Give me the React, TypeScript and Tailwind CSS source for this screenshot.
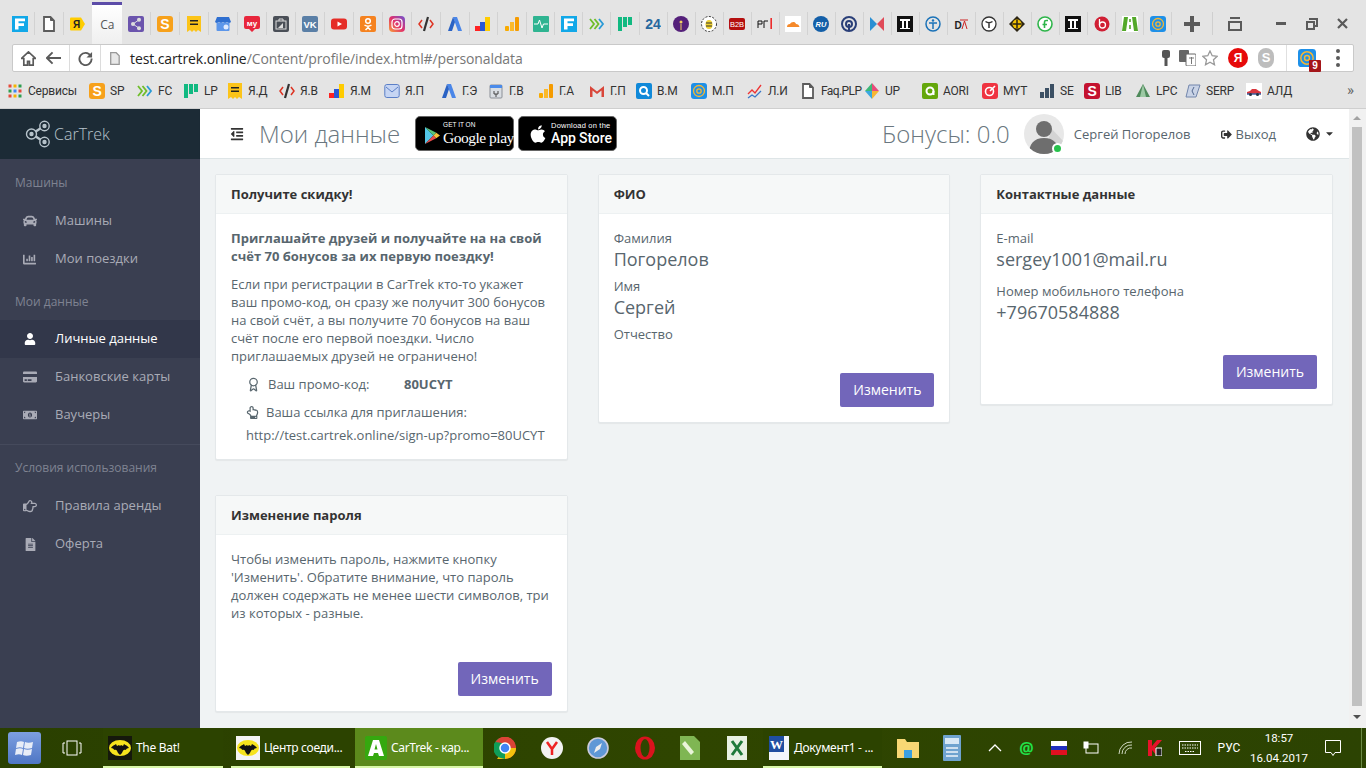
import React from "react";
import {
  FaCar, FaChartBar, FaUser, FaCreditCard, FaMoneyBillAlt, FaRegHandPointRight, FaFileAlt, FaSignOutAlt,
  FaGlobeAmericas, FaCaretDown, FaOutdent, FaApple, FaRegHandPointUp,
} from "react-icons/fa";
import { LuAward } from "react-icons/lu";

type K = { n: string };

function Box({ children, s = 16 }: { children: React.ReactNode; s?: number }) {
  return (
    <svg width={s} height={s} viewBox="0 0 16 16" className="shrink-0 block">
      {children}
    </svg>
  );
}

const T = (p: { x?: number; y?: number; c?: string; z?: number; w?: number; t: string; f?: string }) => (
  <text x={p.x ?? 8} y={p.y ?? 12} textAnchor="middle" fill={p.c ?? "#fff"} fontSize={p.z ?? 11} fontWeight={p.w ?? 700} fontFamily={p.f ?? "'Liberation Sans', sans-serif"}>
    {p.t}
  </text>
);

function Fav({ n, s = 16 }: K & { s?: number }) {
  switch (n) {
    case "F": return <Box s={s}><rect width="16" height="16" fill="#12a8e8" /><path d="M3 2.500h10v2.800H6.500v2H12v2.800H6.500V13.500H3z" fill="#fff" /></Box>;
    case "doc": return <Box s={s}><path d="M3 1h6.500l3.500 3.500V15H3z" fill="#fff" stroke="#5b5b5b" strokeWidth="1.800" /><path d="M9.500 1v3.500h3.500" fill="#5b5b5b" stroke="#5b5b5b" /></Box>;
    case "ya": return <Box s={s}><path d="M1 1.500h10l4 6.500-4 6.500H1q-1 0-1-1V2.500q0-1 1-1z" fill="#ffcc00" /><T x={6.500} y={12} c="#222" z={10} t="Я" /></Box>;
    case "share": return <Box s={s}><rect width="16" height="16" rx="2" fill="#6b54ad" /><circle cx="11" cy="3.800" r="2" fill="#ddd" /><circle cx="11" cy="12.200" r="2" fill="#ddd" /><circle cx="5" cy="8" r="2" fill="#ddd" /><path d="M11 3.800 5 8l6 4.200" stroke="#ddd" fill="none" /></Box>;
    case "S": return <Box s={s}><rect width="16" height="16" rx="3" fill="#f7a11b" /><T y={13} z={14} t="S" /></Box>;
    case "ban": return <Box s={s}><path d="M1 0h14v16l-3-2-2 2-2-2-2 2-2-2-3 2z" fill="#fcc419" /><path d="M4 4h8v1.600H4zM4 7.500h8v1.600H4z" fill="#222" /></Box>;
    case "store": return <Box s={s}><path d="M2 1h12l2 5q-2 2-4 0-2 2-4 0-2 2-4 0-2 2-4 0z" fill="#2f6fd0" /><rect x="1.500" y="6.500" width="13" height="8.500" rx="1" fill="#5c96ea" /><circle cx="11" cy="11" r="2.500" fill="#dfeaff" /></Box>;
    case "mc": return <Box s={s}><path d="M0 2q0-2 2-2h12q2 0 2 2v9q0 2-2 2h-3l-3 3-3-3H2q-2 0-2-2z" fill="#e8263c" /><T y={9.500} z={8} t="му" /></Box>;
    case "bag": return <Box s={s}><rect width="16" height="16" rx="2" fill="#4a4f57" /><rect x="3" y="5" width="10" height="8" fill="none" stroke="#ddd" /><path d="M6 5V3h4v2" stroke="#ddd" fill="none" /><path d="m5 12 5-5v5z" fill="#ddd" /></Box>;
    case "vk": return <Box s={s}><rect width="16" height="16" rx="2" fill="#5a7fa6" /><T z={9.500} t="VK" /></Box>;
    case "yt": return <Box s={s}><rect y="2.500" width="16" height="11" rx="3" fill="#e52d27" /><path d="m6.500 5.500 4.500 2.500-4.500 2.500z" fill="#fff" /></Box>;
    case "ok": return <Box s={s}><rect width="16" height="16" rx="2" fill="#f58220" /><circle cx="8" cy="5" r="2.300" fill="none" stroke="#fff" strokeWidth="1.500" /><path d="M4.500 9c2 1.500 5 1.500 7 0M8 10.500v1M5.500 14 8 11.500l2.500 2.500" stroke="#fff" strokeWidth="1.500" fill="none" /></Box>;
    case "ig": return <Box s={s}><defs><linearGradient id="ig" x1="0" y1="1" x2="1" y2="0"><stop offset="0" stopColor="#f9a13a" /><stop offset=".5" stopColor="#e1306c" /><stop offset="1" stopColor="#6b54d3" /></linearGradient></defs><rect width="16" height="16" rx="4" fill="url(#ig)" /><rect x="3" y="3" width="10" height="10" rx="3" fill="none" stroke="#fff" strokeWidth="1.200" /><circle cx="8" cy="8" r="2.300" fill="none" stroke="#fff" strokeWidth="1.200" /></Box>;
    case "wr": return <Box s={s}><path d="M4 4 1 8l3 4" stroke="#d32" strokeWidth="1.500" fill="none" /><path d="M12 4l3 4-3 4" stroke="#d32" strokeWidth="1.500" fill="none" /><path d="M10 1 6 15" stroke="#333" strokeWidth="2.200" /></Box>;
    case "ad": return <Box s={s}><path d="M6 1h4l5 14h-4z" fill="#4a86e8" /><path d="M6 1 1 15h4l3-9z" fill="#2a62c4" /></Box>;
    case "met": return <Box s={s}><rect x="0" y="10" width="5" height="5" fill="#f22" /><rect x="5" y="6" width="5" height="9" fill="#2a58d6" /><rect x="10" y="1" width="5" height="14" fill="#fc0" /></Box>;
    case "ga": return <Box s={s}><rect x="1" y="10" width="4" height="5" rx="1" fill="#f9ab00" /><rect x="6" y="6" width="4" height="9" fill="#fbb92a" /><rect x="11" y="1" width="4" height="14" rx="1" fill="#f59b00" /></Box>;
    case "pulse": return <Box s={s}><rect width="16" height="16" rx="1" fill="#2fb491" /><path d="M1 8h4l1.500-4L9 12l1.500-4H15" stroke="#fff" fill="none" /></Box>;
    case "chev": return <Box s={s}><path d="m1 3 4 5-4 5M5.500 3l4 5-4 5" stroke="#6fbd2a" strokeWidth="1.800" fill="none" /><path d="m10 3 4 5-4 5" stroke="#2a9ad6" strokeWidth="1.800" fill="none" /></Box>;
    case "lp": return <Box s={s}><rect x="1" y="1" width="4" height="14" fill="#11b981" /><rect x="6" y="1" width="4" height="10" fill="#11b981" /><rect x="11" y="1" width="4" height="8" fill="#11b981" /></Box>;
    case "24": return <Box s={s}><T y={13} z={14} c="#27689f" t="24" /></Box>;
    case "pur": return <Box s={s}><circle cx="8" cy="8" r="8" fill="#54207a" /><circle cx="8" cy="6" r="1.500" fill="#f2d060" /><path d="M8 8v6" stroke="#f2d060" /></Box>;
    case "bug": return <Box s={s}><circle cx="8" cy="8" r="7.500" fill="#fff" stroke="#333" strokeDasharray="2 1.500" /><ellipse cx="8" cy="8.500" rx="3.500" ry="4.500" fill="#f0d232" /><path d="M5 7h6M5 10h6" stroke="#333" /></Box>;
    case "b2b": return <Box s={s}><rect y="2" width="16" height="12" rx="2" fill="#b40f0f" /><T y={11} z={7.500} t="B2B" w={400} /></Box>;
    case "pr": return <Box s={s}><path d="M1 12V5h4v3H1M7 12V5h4" stroke="#111" fill="none" /><rect x="13.500" y="2" width="1.300" height="11" fill="#e00" /></Box>;
    case "cf": return <Box s={s}><rect width="16" height="16" fill="#fff" /><path d="M2 11c0-2 1-3 3-3 1-2 5-3 6 0 2 0 3 1 3.500 3z" fill="#f5892a" /></Box>;
    case "ru": return <Box s={s}><circle cx="8" cy="8" r="8" fill="#135fa8" /><text x="8" y="11" textAnchor="middle" fill="#fff" fontSize="7.500" fontWeight="700" fontStyle="italic" fontFamily="'Liberation Sans', sans-serif">RU</text></Box>;
    case "ring": return <Box s={s}><circle cx="8" cy="8" r="7" fill="none" stroke="#2a3f78" strokeWidth="2" /><circle cx="8" cy="8" r="3" fill="none" stroke="#2a3f78" strokeWidth="2" /><path d="M8 8v7" stroke="#2a3f78" strokeWidth="2" /></Box>;
    case "bow": return <Box s={s}><path d="M1 1v14l7-7z" fill="#2b8fd3" /><path d="M15 1v14L8 8z" fill="#e04a58" /></Box>;
    case "P": return <Box s={s}><rect width="16" height="16" fill="#111" /><path d="M3 3h10v2H3zM5 5h2v8H5zM9 5h2v8H9zM3 12h5v1H3zM8 12h5v1H8z" fill="#fff" /></Box>;
    case "fig": return <Box s={s}><circle cx="8" cy="8" r="7" fill="none" stroke="#1a72b8" strokeWidth="1.500" /><circle cx="8" cy="4.500" r="1.200" fill="#1a72b8" /><path d="M4 7h8M8 7v6" stroke="#1a72b8" strokeWidth="1.500" /></Box>;
    case "da": return <Box s={s}><T x={5} y={13} z={10} c="#222" t="D" /><path d="m9 13 2.500-8 2.500 8M7 4h8" stroke="#c22" fill="none" /></Box>;
    case "tc": return <Box s={s}><circle cx="8" cy="8" r="7" fill="#fff" stroke="#333" strokeWidth="1.300" /><path d="M4.500 5.500c2 1.500 5 1.500 7 0M8 6.500V12" stroke="#333" strokeWidth="1.500" fill="none" /></Box>;
    case "dia": return <Box s={s}><path d="M8 0l8 8-8 8-8-8z" fill="#2b2414" /><circle cx="8" cy="8" r="4.500" fill="#f2c200" /><path d="M8 4v8M4 8h8" stroke="#2b2414" strokeWidth="1.500" /></Box>;
    case "fg": return <Box s={s}><circle cx="8" cy="8" r="7" fill="#fff" stroke="#2eb54a" strokeWidth="1.600" /><path d="M11 4.500H9c-1 0-1.500.5-1.500 1.500v6M5.500 8.500h4.500" stroke="#2eb54a" strokeWidth="1.600" fill="none" /></Box>;
    case "b6": return <Box s={s}><circle cx="8" cy="8" r="7.500" fill="#d01f34" /><circle cx="8.500" cy="9" r="3" fill="none" stroke="#fff" strokeWidth="1.300" /><path d="M5.500 9V3" stroke="#fff" strokeWidth="1.300" /></Box>;
    case "road": return <Box s={s}><rect width="16" height="16" fill="#fff" /><path d="M2 1h4L4 15H0zM10 1h4l2 14h-4zM7.200 3h1.600v3H7.200zM7.200 9h1.600v4H7.200z" fill="#53a829" /></Box>;
    case "at": return <Box s={s}><rect width="16" height="16" rx="3" fill="#1e90e8" /><circle cx="8" cy="8" r="5.500" fill="none" stroke="#f7b733" strokeWidth="1.300" /><circle cx="8" cy="8" r="2.200" fill="none" stroke="#f7b733" strokeWidth="1.300" /></Box>;
    case "apps": return <Box s={s}><g>{[0, 1, 2].map((i) => [0, 1, 2].map((j) => <rect key={i + "-" + j} x={1.500 + i * 5} y={1.500 + j * 5} width="3" height="3" fill={["#e64a3b", "#f5b400", "#2e9e4f", "#4285f4"][(i + j * 2) % 4]} />))}</g></Box>;
    case "mail": return <Box s={s}><rect x=".8" y="1.500" width="14.400" height="13" rx="2" fill="#c6d5f3" stroke="#5b7fc7" /><path d="m2 4 6 5 6-5" stroke="#5b7fc7" fill="none" /></Box>;
    case "bk": return <Box s={s}><rect x="2" y="2" width="12" height="13" rx="1" fill="#d9dee3" stroke="#8a8f96" /><rect x="2" y="2" width="12" height="3" fill="#4b8bea" /><path d="M6 8v3h4V8M8 11v3" stroke="#444" fill="none" /></Box>;
    case "gm": return <Box s={s}><path d="M1 14V3l7 5.500L15 3v11h-2.500V7.500L8 11 3.500 7.500V14z" fill="#d9463a" /></Box>;
    case "q": return <Box s={s}><rect width="16" height="16" rx="2" fill="#1089d9" /><circle cx="7.500" cy="7.500" r="3.500" fill="none" stroke="#fff" strokeWidth="2" /><path d="m10 10 3 3" stroke="#fff" strokeWidth="2" /></Box>;
    case "li": return <Box s={s}><path d="m1 11 4-4 3 3 6-8" stroke="#e33" strokeWidth="1.300" fill="none" /><path d="m1 15 4-3 3 2 6-6" stroke="#3a78c8" strokeWidth="1.300" fill="none" /></Box>;
    case "up": return <Box s={s}><path d="M8 0 1 8h7z" fill="#3cb878" /><path d="M8 0l7 8H8z" fill="#e94b7b" /><path d="M1 8l7 8V8z" fill="#3aa8e0" /><path d="M15 8l-7 8V8z" fill="#f7b733" /></Box>;
    case "aori": return <Box s={s}><rect width="16" height="16" rx="2" fill="#64a70b" /><circle cx="8" cy="8" r="3.500" fill="none" stroke="#fff" strokeWidth="2" /><path d="M11.500 8v4" stroke="#fff" strokeWidth="2" /></Box>;
    case "myt": return <Box s={s}><rect width="16" height="16" rx="3" fill="#ef3340" /><circle cx="7.500" cy="8.500" r="4" fill="none" stroke="#fff" strokeWidth="1.600" /><path d="m8 8 5-5" stroke="#fff" strokeWidth="1.600" /></Box>;
    case "se": return <Box s={s}><rect x="1" y="9" width="4" height="6" fill="#3c5064" /><rect x="6" y="5" width="4" height="10" fill="#3c5064" /><rect x="11" y="1" width="4" height="14" fill="#3c5064" /></Box>;
    case "lib": return <Box s={s}><rect width="16" height="16" rx="3" fill="#c4122f" /><T y={13} z={14} t="S" /></Box>;
    case "tree": return <Box s={s}><path d="M8 1 1 14h14z" fill="#4f8a5b" /><path d="M8 1 5 14h6z" fill="#9cc9a4" /></Box>;
    case "serp": return <Box s={s}><path d="M4 2h11l-4 12H1z" fill="#c9d3e6" stroke="#7286ac" /><path d="M9 4 7 8l2 4" stroke="#52688f" fill="none" /></Box>;
    case "auto": return <Box s={s}><rect width="16" height="16" fill="#fff" /><path d="M1 11V9l3-1 2-2h4l3 2 2 1v2z" fill="#d9363e" /><path d="M1 11h14" stroke="#3a5fa0" strokeWidth="1.500" /><circle cx="4.500" cy="11.500" r="1.500" fill="#234" /><circle cx="11.500" cy="11.500" r="1.500" fill="#234" /></Box>;
    default: return <Box s={s}>{null}</Box>;
  }
}

const tabs = ["F","doc","ya","ACTIVE","share","S","ban","store","mc","bag","vk","yt","ok","ig","wr","ad","met","ga","pulse","F","chev","lp","24","pur","bug","b2b","pr","cf","ru","ring","bow","P","fig","da","tc","dia","fg","P","b6","road","at"];

const bookmarks: { i: string; t: string; w: string; c?: string }[] = [
  { i: "S", t: "SP", w: "w-[48px]" }, { i: "chev", t: "FC", w: "w-[46px]" }, { i: "lp", t: "LP", w: "w-[44px]" },
  { i: "ban", t: "Я.Д", w: "w-[52px]" }, { i: "wr", t: "Я.В", w: "w-[50px]" }, { i: "met", t: "Я.М", w: "w-[55px]" },
  { i: "mail", t: "Я.П", w: "w-[57px]" }, { i: "ad", t: "Г.Э", w: "w-[47px]" }, { i: "bk", t: "Г.В", w: "w-[50px]" },
  { i: "ga", t: "Г.А", w: "w-[51px]" }, { i: "gm", t: "Г.П", w: "w-[47px]" }, { i: "q", t: "В.М", w: "w-[55px]" },
  { i: "at", t: "М.П", w: "w-[56px]" }, { i: "li", t: "Л.И", w: "w-[53px]" }, { i: "doc", t: "Faq.PLP", w: "w-[64px]", c: "tracking-[-0.6px]" },
  { i: "up", t: "UP", w: "w-[58px]" }, { i: "aori", t: "AORI", w: "w-[60px]" }, { i: "myt", t: "MYT", w: "w-[57px]" },
  { i: "se", t: "SE", w: "w-[45px]" }, { i: "lib", t: "LIB", w: "w-[51px]" }, { i: "tree", t: "LPC", w: "w-[50px]" },
  { i: "serp", t: "SERP", w: "w-[61px]" }, { i: "auto", t: "АЛД", w: "w-[60px]" },
];

function Browser() {
  return (
    <div className="h-[109px] shrink-0 bg-[#e4e4e4] flex flex-col text-[#333] border-b border-[#cfcfcf]">
      <div className="h-[44px] flex items-start pl-[6.500px]">
        {tabs.map((n, idx) =>
          n === "ACTIVE" ? (
            <div key={idx} className="w-[29.940px] -ml-[1px] h-[42px] mt-[2px] border-t-[3px] border-[#5c4ca8] bg-gradient-to-b from-white to-[#efefef] flex items-center justify-center text-[12px] text-[#555]">
              Ca
            </div>
          ) : (
            <div key={idx} className={(idx < 18 ? "w-[28.940px]" : "w-[28.040px]") + " h-[23px] mt-[12px] flex items-center justify-center border-r border-[#d2d2d2]"}>
              <Fav n={n} />
            </div>
          )
        )}
        <div className="w-[41px] h-[23px] mt-[12px] flex items-center justify-center border-r border-[#cfcfcf]">
          <svg width="16" height="16" viewBox="0 0 16 16"><path d="M6 0h4v6h6v4h-6v6H6v-6H0V6h6z" fill="#5a5a5a" /></svg>
        </div>
        <div className="w-[43px] h-[23px] mt-[12px] flex items-center justify-center">
          <svg width="16" height="14" viewBox="0 0 16 14"><path d="M1 4h14v10H1zM3 0h10v2H3z" fill="#5a5a5a" /><rect x="3" y="6" width="10" height="6" fill="#e4e4e4" /></svg>
        </div>
        <div className="flex-1" />
        <div className="w-[31px] h-[23px] mt-[12px] flex items-center justify-center"><div className="w-[10px] h-[3px] bg-[#5a5a5a]" /></div>
        <div className="w-[31px] h-[23px] mt-[12px] flex items-center justify-center">
          <svg width="12" height="12" viewBox="0 0 12 12"><path d="M3 1h8v7H9M1 4h7v7H1z" stroke="#5a5a5a" strokeWidth="2" fill="none" /></svg>
        </div>
        <div className="w-[39px] h-[23px] mt-[12px] flex items-center justify-start pl-[10px]">
          <svg width="11" height="11" viewBox="0 0 11 11"><path d="m1 1 9 9M10 1l-9 9" stroke="#5a5a5a" strokeWidth="2.200" /></svg>
        </div>
      </div>
      <div className="mx-[12px] h-[28px] shrink-0 bg-white border border-[#c9c9c9] rounded-[2px] flex items-center">
        <div className="w-[57px] h-full border-r border-[#dcdcdc] flex items-center gap-[10px] pl-[8px]">
          <svg width="15" height="15" viewBox="0 0 16 16"><path d="M8 1 .5 8H3v7h4v-4h2v4h4V8h2.500z" fill="none" stroke="#5a5a5a" strokeWidth="1.800" /></svg>
          <svg width="15" height="14" viewBox="0 0 16 14"><path d="M7 1 1 7l6 6M1 7h15" fill="none" stroke="#5a5a5a" strokeWidth="2" /></svg>
        </div>
        <div className="w-[31px] h-full border-r border-[#dcdcdc] flex items-center justify-center">
          <svg width="15" height="15" viewBox="0 0 16 16"><path d="M13.500 5A6.500 6.500 0 1 0 14.500 8" fill="none" stroke="#5a5a5a" strokeWidth="2" /><path d="M15 1v6H9z" fill="#5a5a5a" /></svg>
        </div>
        <div className="ml-[9px] w-[20px]">
          <svg width="10" height="13" viewBox="0 0 10 13"><path d="M.700.700h5.500l3 3v8.600H.700z" fill="#e8e8e8" stroke="#999" strokeWidth="1.300" /></svg>
        </div>
        <div className="text-[14px] font-['Open_Sans',sans-serif] tracking-[-0.1px]">
          <span className="text-[#222]">test.cartrek.online</span>
          <span className="text-[#777]">/Content/profile/index.html#/personaldata</span>
        </div>
        <div className="flex-1" />
        <div className="flex items-center w-[64px] gap-[6px] pl-[1px]">
          <svg width="14" height="16" viewBox="0 0 14 16"><rect x="3" y="0" width="8" height="8" rx="2" fill="#555" /><rect x="5.500" y="7" width="3" height="9" fill="#555" /></svg>
          <svg width="17" height="16" viewBox="0 0 17 16"><rect x="0" y="0" width="10" height="12" rx="1" fill="#666" /><rect x="7" y="4" width="10" height="12" rx="1" fill="#fff" stroke="#666" /><path d="M10 8h5M12.500 7v7" stroke="#777" /></svg>
          <svg width="16" height="16" viewBox="0 0 16 16"><path d="m8 1 2.200 4.700 5 .6-3.700 3.500 1 5L8 12.300l-4.500 2.500 1-5L.8 6.300l5-.6z" fill="none" stroke="#999" strokeWidth="1.300" /></svg>
        </div>
        <div className="w-[20px] h-[20px] rounded-full bg-[#e60a0a] text-white text-[12px] font-bold flex items-center justify-center font-['Liberation_Sans',sans-serif] ml-[6px]">Я</div>
        <div className="w-[16px] h-[20px] rounded-full bg-[#bdbdbd] ml-[10px] flex items-center justify-center text-white text-[13px] font-bold font-['Liberation_Sans',sans-serif]">S</div>
        <div className="w-[1px] h-full bg-[#e0e0e0] ml-[12px]" />
        <div className="relative ml-[11px] w-[18px]">
          <Fav n="at" s={18} />
          <div className="absolute -right-[5px] -bottom-[5px] w-[12px] h-[12px] bg-[#a4161a] text-white text-[10px] font-bold leading-[12px] text-center rounded-[1px] font-['Liberation_Sans',sans-serif]">9</div>
        </div>
        <div className="ml-[20px] mr-[13px] flex flex-col gap-[3px]">
          <div className="w-[4px] h-[4px] rounded-full bg-[#5a5a5a]" />
          <div className="w-[4px] h-[4px] rounded-full bg-[#5a5a5a]" />
          <div className="w-[4px] h-[4px] rounded-full bg-[#5a5a5a]" />
        </div>
      </div>
      <div className="flex-1 flex items-center pl-[6px] pt-[1px] font-['Roboto',sans-serif] text-[12px] text-[#333] tracking-[-0.2px]">
        <div className="w-[83px] flex items-center gap-[5px] pl-[1px]"><Fav n="apps" s={16} /><span>Сервисы</span></div>
        {bookmarks.map((b, i) => (
          <div key={i} className={"flex items-center gap-[5px] " + b.w}>
            <Fav n={b.i} s={16} />
            <span className={b.c ?? ""}>{b.t}</span>
          </div>
        ))}
        <span className="ml-[41px] text-[15px] text-[#666] leading-none">»</span>
      </div>
    </div>
  );
}

function NavItem({ icon, label, active }: { icon: React.ReactNode; label: string; active?: boolean }) {
  return (
    <div className={"h-[38px] flex items-center pl-[23px] text-[13px] " + (active ? "bg-[#32374a] text-white" : "text-[#a9abb6]")}>
      <span className="w-[32px] flex items-center">{icon}</span>
      <span>{label}</span>
    </div>
  );
}

function Section({ children, cls }: { children: React.ReactNode; cls: string }) {
  return <div className={"pl-[15px] text-[12px] text-[#7f8392] leading-[16px] " + cls}>{children}</div>;
}

function Sidebar() {
  return (
    <div className="w-[200px] shrink-0 bg-[#3a3f51] flex flex-col">
      <div className="h-[50px] shrink-0 bg-[#1c2b36] flex items-center pl-[25px] gap-[3px] text-[#b8c4cc]">
        <svg width="26" height="28" viewBox="0 0 26 28" fill="none" stroke="#b8c4cc" strokeWidth="1.400">
          <path d="M7 14 19 6M7 14l12 8" strokeWidth="2.400" />
          <circle cx="6.500" cy="14" r="5" fill="#1c2b36" />
          <circle cx="19.500" cy="6" r="4.700" fill="#1c2b36" />
          <circle cx="19.500" cy="22" r="4.700" fill="#1c2b36" />
          <circle cx="6.500" cy="14" r="1.500" fill="#b8c4cc" />
          <circle cx="19.500" cy="6" r="1.500" fill="#b8c4cc" />
          <circle cx="19.500" cy="22" r="1.500" fill="#b8c4cc" />
        </svg>
        <span className="text-[16px] font-light">CarTrek</span>
      </div>
      <Section cls="mt-[16px]">Машины</Section>
      <div className="mt-[11px]">
        <NavItem icon={<FaCar size={14} />} label="Машины" />
        <NavItem icon={<FaChartBar size={13} />} label="Мои поездки" />
      </div>
      <Section cls="mt-[16px]">Мои данные</Section>
      <div className="mt-[10px]">
        <NavItem active icon={<FaUser size={12} className="text-white ml-[1px]" />} label="Личные данные" />
        <NavItem icon={<FaCreditCard size={14} />} label="Банковские карты" />
        <NavItem icon={<FaMoneyBillAlt size={14} />} label="Ваучеры" />
      </div>
      <div className="h-[1px] bg-[#454a5c] mt-[10px]" />
      <Section cls="mt-[15px]">Условия использования</Section>
      <div className="mt-[11px]">
        <NavItem icon={<FaRegHandPointRight size={14} />} label="Правила аренды" />
        <NavItem icon={<FaFileAlt size={13} className="ml-[1px]" />} label="Оферта" />
      </div>
    </div>
  );
}

function Badges() {
  return (
    <div className="flex gap-[4px] ml-[15px]">
      <div className="w-[99px] h-[35px] bg-black rounded-[5px] border border-[#666] flex items-center pl-[9px] text-white">
        <svg width="15" height="17" viewBox="0 0 16 18" className="shrink-0 mt-[3px]">
          <path d="M0 0v18l9-9z" fill="#52c6e8" />
          <path d="M0 0l9 9 3-3z" fill="#5bc57a" />
          <path d="M0 18l9-9 3 3z" fill="#e94b4b" />
          <path d="M12 6 9 9l3 3 4-3z" fill="#f8c33a" />
        </svg>
        <div className="ml-[3px] flex flex-col leading-none whitespace-nowrap">
          <span className="text-[6.500px] font-['Liberation_Sans',sans-serif]">GET IT ON</span>
          <span className="text-[15.500px] tracking-[-0.5px] font-['Liberation_Serif',serif] mt-[1px]">Google play</span>
        </div>
      </div>
      <div className="w-[99px] h-[35px] bg-black rounded-[5px] border border-[#666] flex items-center pl-[9px] text-white">
        <FaApple size={20} className="shrink-0" />
        <div className="ml-[3px] flex flex-col leading-none whitespace-nowrap">
          <span className="text-[7.500px] tracking-[0.2px] font-['Liberation_Sans',sans-serif]">Download on the</span>
          <span className="text-[14px] font-medium mt-[1px] tracking-[-0.1px] font-['Roboto',sans-serif]">App Store</span>
        </div>
      </div>
    </div>
  );
}

function Header() {
  return (
    <div className="h-[50px] shrink-0 bg-white border-b border-[#dee5e7] flex items-center pl-[30px] pr-[14px] text-[#58666e] shadow-[0_1px_1px_rgba(0,0,0,0.04)]">
      <FaOutdent size={14} className="text-[#333]" />
      <div className="ml-[15px] text-[24px] font-light text-[#6a7780]">Мои данные</div>
      <Badges />
      <div className="flex-1" />
      <div className="text-[24px] font-light text-[#6a7780]">Бонусы: 0.0</div>
      <div className="relative ml-[14px] w-[40px] h-[40px] rounded-full bg-[#e8e8e8] overflow-visible">
        <svg width="40" height="40" viewBox="0 0 40 40" className="rounded-full block">
          <path d="M27 14 40 28v12H22z" fill="#d4d4d4" />
          <circle cx="20" cy="15" r="8" fill="#6e6e6e" />
          <path d="M5 40c0-10 5-16 15-16s15 6 15 16z" fill="#6e6e6e" />
        </svg>
        <div className="absolute right-[1px] bottom-0 w-[11px] h-[11px] rounded-full bg-[#27c24c] border-2 border-white" />
      </div>
      <div className="ml-[10px] text-[13px] pt-[2px]">Сергей Погорелов</div>
      <div className="ml-[30px] flex items-center gap-[4px] text-[13px] pt-[2px]">
        <FaSignOutAlt size={11} className="text-[#333]" />
        <span>Выход</span>
      </div>
      <div className="ml-[30px] flex items-center gap-[4px] text-[#333]">
        <FaGlobeAmericas size={14} />
        <FaCaretDown size={11} />
      </div>
    </div>
  );
}

function Card({ title, children, cls = "" }: { title: string; children: React.ReactNode; cls?: string }) {
  return (
    <div className={"bg-white border border-[#e4e8ea] rounded-[2px] shadow-[0_1px_1px_rgba(0,0,0,0.05)] flex flex-col " + cls}>
      <div className="h-[39px] shrink-0 bg-[#f6f8f8] border-b border-[#edf1f2] px-[15px] flex items-center text-[13px] font-bold text-[#333]">{title}</div>
      <div className="flex-1 px-[15px] flex flex-col">{children}</div>
    </div>
  );
}

function Btn() {
  return <div className="self-end w-[94px] h-[34px] bg-[#7266ba] rounded-[2px] text-white text-[14px] flex items-center justify-center">Изменить</div>;
}

function Content() {
  return (
    <div className="flex-1 bg-[#f0f3f4] pl-[15px] pr-[16px] pt-[15px] grid grid-cols-3 gap-x-[30px] items-start text-[13px] text-[#58666e] leading-[18px]">
      <div className="flex flex-col gap-[35px]">
        <Card title="Получите скидку!" cls="h-[286px]">
          <div className="font-bold mt-[15px]">Приглашайте друзей и получайте на на свой<br />счёт 70 бонусов за их первую поездку!</div>
          <div className="mt-[10px]">Если при регистрации в CarTrek кто-то укажет ваш промо-код, он сразу же получит 300 бонусов на свой счёт, а вы получите 70 бонусов на ваш счёт после его первой поездки. Число приглашаемых друзей не ограничено!</div>
          <div className="mt-[10px] ml-[15px] flex items-center">
            <LuAward size={15} className="mr-[7px]" />
            <span className="w-[136px]">Ваш промо-код:</span>
            <b>80UCYT</b>
          </div>
          <div className="mt-[10px] ml-[15px] flex items-center">
            <FaRegHandPointUp size={13} className="mr-[7px]" />
            <span>Ваша ссылка для приглашения:</span>
          </div>
          <div className="mt-[5px] ml-[15px] whitespace-nowrap">http://test.cartrek.online/sign-up?promo=80UCYT</div>
        </Card>
        <Card title="Изменение пароля" cls="h-[217px]">
          <div className="mt-[15px]">Чтобы изменить пароль, нажмите кнопку 'Изменить'. Обратите внимание, что пароль должен содержать не менее шести символов, три из которых - разные.</div>
          <div className="flex-1" />
          <div className="self-end mb-[15px]"><Btn /></div>
        </Card>
      </div>
      <Card title="ФИО" cls="h-[249px]">
        <div className="mt-[15px]">Фамилия</div>
        <div className="text-[18px] leading-[24px]">Погорелов</div>
        <div className="mt-[6px]">Имя</div>
        <div className="text-[18px] leading-[24px]">Сергей</div>
        <div className="mt-[6px]">Отчество</div>
        <div className="flex-1" />
        <div className="self-end mb-[15px]"><Btn /></div>
      </Card>
      <Card title="Контактные данные" cls="h-[231px]">
        <div className="mt-[15px]">E-mail</div>
        <div className="text-[18px] leading-[24px]">sergey1001@mail.ru</div>
        <div className="mt-[11px]">Номер мобильного телефона</div>
        <div className="text-[18px] leading-[24px]">+79670584888</div>
        <div className="flex-1" />
        <div className="self-end mb-[15px]"><Btn /></div>
      </Card>
    </div>
  );
}

function Scrollbar() {
  return (
    <div className="w-[17px] shrink-0 bg-[#f1f1f1] flex flex-col">
      <div className="h-[18px] flex items-center justify-center pr-[1px]"><div className="w-0 h-0 border-x-[4px] border-x-transparent border-b-[4px] border-b-[#a3a3a3]" /></div>
      <div className="flex-1 w-[10px] ml-[3px] bg-[#c1c1c1]" />
      <div className="h-[22px] flex items-center justify-center pr-[1px]"><div className="w-0 h-0 border-x-[4px] border-x-transparent border-t-[4px] border-t-[#505050]" /></div>
    </div>
  );
}

function TaskBtn({ w, cls = "", icon, label, on, active }: { w: string; cls?: string; icon: React.ReactNode; label?: string; on?: boolean; active?: boolean }) {
  return (
    <div className={"relative h-full flex items-center " + w + " " + cls + (active ? " bg-[#5c8a1c]" : on ? " bg-[#2c4300]" : "")}>
      {icon}
      {label && <span className="ml-[4px] text-[12px] tracking-[-0.3px] text-white whitespace-nowrap">{label}</span>}
      {(on || active) && <div className="absolute left-0 right-0 bottom-0 h-[2px] bg-[#d9f7a8]" />}
    </div>
  );
}

function Bat({ dotted }: { dotted?: boolean }) {
  return (
    <svg width="24" height="24" viewBox="0 0 24 24" className="shrink-0">
      <rect width="24" height="24" fill={dotted ? "#f4f4f4" : "#15180c"} />
      <ellipse cx="12" cy="12" rx="11" ry="8" fill="#f6e31d" />
      <path d="M3 12c2-3 4-3 5-4l1 2 2-1 1 1 1-1 2 1 1-2c1 1 3 1 5 4-2 0-3 1-3 2-2-1-3 0-4 3l-2 2-2-2c-1-3-2-4-4-3 0-1-1-2-3-2z" fill="#111" />
    </svg>
  );
}

function Taskbar() {
  return (
    <div className="h-[40px] shrink-0 bg-gradient-to-r from-[#2a4000] via-[#2f4500] to-[#2c4302] flex items-center font-['Noto_Sans',sans-serif] text-white">
      <div className="ml-[8px] w-[33px] h-[32px] rounded-[3px] bg-gradient-to-b from-[#7d9fe0] to-[#4f76c4] flex items-center justify-center">
        <svg width="20" height="20" viewBox="0 0 20 20"><path d="M2 4c3-1 5-1 7 0l-1 6c-2-1-4-1-7 0zM10 4c2 1 5 1 8 0l-1 6c-3 1-6 1-8 0zM1 11c3-1 5-1 7 0l-1 6c-2-1-4-1-7 0zM9 11c2 1 5 1 8 0l-1 6c-3 1-6 1-8 0z" fill="#e8edf7" /></svg>
      </div>
      <div className="w-[62px] flex justify-center">
        <svg width="20" height="16" viewBox="0 0 20 16" fill="none" stroke="#fff" strokeWidth="1"><rect x="5" y="1" width="10" height="14" /><path d="M3 3H1v10h2M17 3h2v10h-2" /></svg>
      </div>
      <TaskBtn w="w-[120px]" cls="pl-[5px]" on icon={<Bat />} label="The Bat!" />
      <div className="w-[8px]" />
      <TaskBtn w="w-[119px]" cls="pl-[5px]" on icon={<Bat dotted />} label="Центр соеди..." />
      <div className="w-[5px]" />
      <TaskBtn w="w-[128px]" cls="pl-[10px]" active icon={
        <svg width="22" height="24" viewBox="0 0 22 24" className="shrink-0"><rect width="22" height="24" rx="2" fill="#35a80f" /><path d="M8 4h6l5 16h-5l-1-3H9l-1 3H3zM9.500 13.500h3L11 8z" fill="#fff" /></svg>
      } label="CarTrek - кар..." />
      <div className="w-[11px]" />
      <div className="flex items-center h-full">
        <div className="w-[47px]">
          <svg width="22" height="22" viewBox="0 0 22 22"><circle cx="11" cy="11" r="11" fill="#db4437" /><path d="M11 11 3 22h8a11 11 0 0 0 11-11z" fill="#f4c20d" /><path d="M11 11 5.500 1A11 11 0 0 0 5 20.500L11 22z" fill="#0f9d58" /><path d="M1.500 5A11 11 0 0 1 21 6.500H11z" fill="#db4437" /><circle cx="11" cy="11" r="5" fill="#4285f4" stroke="#fff" strokeWidth="1.500" /></svg>
        </div>
        <div className="w-[46px]">
          <svg width="22" height="22" viewBox="0 0 22 22"><circle cx="11" cy="11" r="11" fill="#f2f2f2" /><path d="M6 5l5 7 5-7M11 12v6" stroke="#e22" strokeWidth="2.500" fill="none" /></svg>
        </div>
        <div className="w-[47px]">
          <svg width="22" height="22" viewBox="0 0 22 22"><circle cx="11" cy="11" r="10" fill="#5f98d6" stroke="#ccd" strokeWidth="1.600" /><path d="m15 6-6 4 -2 6 6-4z" fill="#eee" /></svg>
        </div>
        <div className="w-[45px]">
          <svg width="22" height="24" viewBox="0 0 22 24"><ellipse cx="11" cy="12" rx="10" ry="11.500" fill="#d9131d" /><ellipse cx="11" cy="12" rx="4.500" ry="9" fill="#2f4500" /></svg>
        </div>
        <div className="w-[47px]">
          <svg width="22" height="26" viewBox="0 0 22 26"><path d="M1 1h14l6 6v18H1z" fill="#7fb653" /><path d="m6 6 9 11-3 3-9-11z" fill="#eaf5da" /></svg>
        </div>
        <div className="w-[37px]">
          <svg width="22" height="26" viewBox="0 0 22 26"><rect x="1" y="1" width="20" height="24" fill="#e8f1e3" /><path d="M6 6l10 14M16 6 6 20" stroke="#1f7a3a" strokeWidth="3" /></svg>
        </div>
      </div>
      <TaskBtn w="w-[119px]" on cls="pl-[5px]" icon={
        <svg width="22" height="26" viewBox="0 0 22 26" className="shrink-0"><rect x="1" y="1" width="20" height="24" fill="#f2f6fc" /><rect width="15" height="16" x="1" y="1" fill="#1f4ea1" /><text x="8.500" y="14" textAnchor="middle" fill="#fff" fontSize="13" fontWeight="700" fontFamily="'Liberation Serif', serif">W</text></svg>
      } label="Документ1 - ..." />
      <div className="w-[15px]" />
      <div className="w-[46px]">
        <svg width="22" height="22" viewBox="0 0 22 22"><path d="M0 2h8l2 3h12v16H0z" fill="#f7d774" /><rect x="7" y="13" width="8" height="8" fill="#3aa0e0" /></svg>
      </div>
      <div className="w-[38px]">
        <svg width="18" height="26" viewBox="0 0 18 26"><rect width="18" height="26" rx="1" fill="#6fa3cf" /><rect x="2" y="3" width="14" height="6" fill="#d8e8f5" /><path d="M3 12h12v2H3zM3 16h12v2H3zM3 20h12v2H3z" fill="#cfe0ef" /></svg>
      </div>
      <div className="w-[22px] flex ml-[7px]">
        <svg width="14" height="8" viewBox="0 0 14 8"><path d="m1 7 6-6 6 6" fill="none" stroke="#fff" strokeWidth="1.300" /></svg>
      </div>
      <div className="w-[33px] text-center text-[#22e24a] font-bold text-[16px] leading-none">@</div>
      <div className="w-[32px] flex justify-center">
        <div className="w-[16px] h-[14px] flex flex-col"><div className="flex-1 bg-white" /><div className="flex-1 bg-[#2030c0]" /><div className="flex-1 bg-[#e01020]" /></div>
      </div>
      <div className="w-[32px] flex justify-center">
        <svg width="16" height="14" viewBox="0 0 16 14" fill="none" stroke="#fff"><rect x="3" y="3" width="12" height="9" /><rect x="1" y="1" width="4" height="6" fill="#fff" /></svg>
      </div>
      <div className="w-[38px] flex justify-center">
        <svg width="16" height="14" viewBox="0 0 16 14" fill="none" stroke="#cfd8c0"><path d="M1 13A12 12 0 0 1 14 1M4 13a9 9 0 0 1 10-9M7 13a6 6 0 0 1 7-6" /></svg>
      </div>
      <div className="w-[20px] flex justify-center">
        <svg width="14" height="16" viewBox="0 0 14 16"><path d="M0 0h4v6l5-6h5L7 8l7 8H9L4 10v6H0z" fill="#e8122a" /><path d="M8 8h6v8H8z" fill="#222" stroke="#fff" /></svg>
      </div>
      <div className="w-[50px] flex justify-center">
        <svg width="22" height="14" viewBox="0 0 22 14" fill="none" stroke="#fff"><rect x=".5" y=".5" width="21" height="13" /><path d="M3 4h16M3 7h16M6 10.500h10" strokeDasharray="1.500 1" /></svg>
      </div>
      <div className="w-[28px] flex justify-center whitespace-nowrap text-[12px] font-['Roboto',sans-serif]">РУС</div>
      <div className="w-[62px] text-center text-[11.500px] leading-[20px] ml-[5px] font-['Roboto',sans-serif]">
        <div>18:57</div>
        <div>16.04.2017</div>
      </div>
      <div className="ml-[15px]">
        <svg width="16" height="16" viewBox="0 0 16 16" fill="none" stroke="#fff"><path d="M.5.500h15v12H10l-2 3-2-3H.5z" /></svg>
      </div>
      <div className="ml-[20px] w-[1px] self-stretch bg-[#6b8a45]" />
    </div>
  );
}

export default function App() {
  return (
    <div className="w-[1366px] h-[768px] overflow-hidden flex flex-col font-['Open_Sans',sans-serif]">
      <Browser />
      <div className="flex-1 flex min-h-0">
        <Sidebar />
        <div className="flex-1 flex flex-col min-w-0">
          <Header />
          <Content />
        </div>
        <Scrollbar />
      </div>
      <Taskbar />
    </div>
  );
}
